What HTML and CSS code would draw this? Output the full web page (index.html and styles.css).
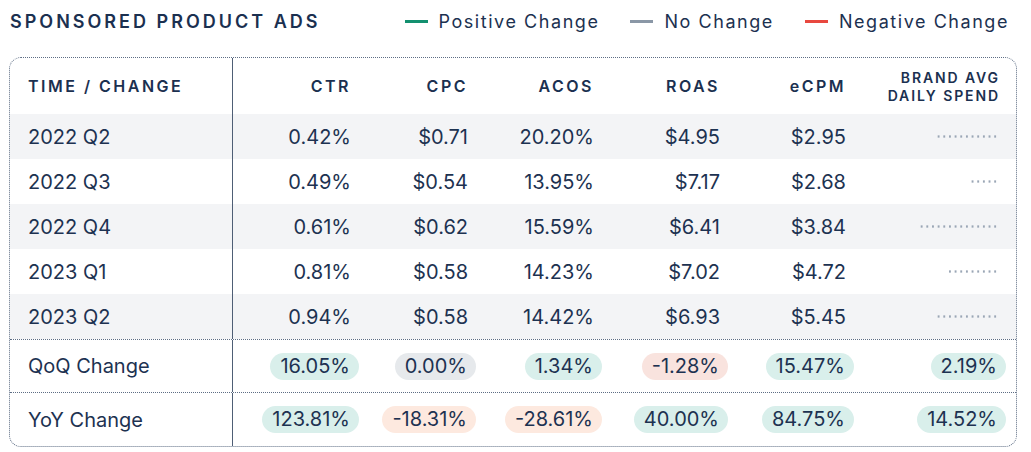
FILE: index.html
```html
<!DOCTYPE html>
<html>
<head>
<meta charset="utf-8">
<link rel="stylesheet" href="styles.css">
</head>
<body>
<div class="page">
  <div class="top">
    <h1 class="title">SPONSORED PRODUCT ADS</h1>
    <div class="legend">
      <span class="leg"><span class="swatch pos"></span>Positive Change</span>
      <span class="leg"><span class="swatch none"></span>No Change</span>
      <span class="leg"><span class="swatch neg"></span>Negative Change</span>
    </div>
  </div>
  <div class="card">
    <div class="row head">
      <div class="c first">TIME / CHANGE</div>
      <div class="c">CTR</div>
      <div class="c">CPC</div>
      <div class="c">ACOS</div>
      <div class="c">ROAS</div>
      <div class="c">eCPM</div>
      <div class="c small">BRAND AVG<br>DAILY SPEND</div>
    </div>
    <div class="row data alt">
      <div class="c first">2022 Q2</div>
      <div class="c">0.42%</div><div class="c">$0.71</div><div class="c">20.20%</div><div class="c">$4.95</div><div class="c">$2.95</div>
      <div class="c"><span class="dots" style="width:64px"></span></div>
    </div>
    <div class="row data">
      <div class="c first">2022 Q3</div>
      <div class="c">0.49%</div><div class="c">$0.54</div><div class="c">13.95%</div><div class="c">$7.17</div><div class="c">$2.68</div>
      <div class="c"><span class="dots" style="width:29px"></span></div>
    </div>
    <div class="row data alt">
      <div class="c first">2022 Q4</div>
      <div class="c">0.61%</div><div class="c">$0.62</div><div class="c">15.59%</div><div class="c">$6.41</div><div class="c">$3.84</div>
      <div class="c"><span class="dots" style="width:80px"></span></div>
    </div>
    <div class="row data">
      <div class="c first">2023 Q1</div>
      <div class="c">0.81%</div><div class="c">$0.58</div><div class="c">14.23%</div><div class="c">$7.02</div><div class="c">$4.72</div>
      <div class="c"><span class="dots" style="width:49px"></span></div>
    </div>
    <div class="row data alt">
      <div class="c first">2023 Q2</div>
      <div class="c">0.94%</div><div class="c">$0.58</div><div class="c">14.42%</div><div class="c">$6.93</div><div class="c">$5.45</div>
      <div class="c"><span class="dots" style="width:64px"></span></div>
    </div>
    <div class="row change">
      <div class="c first">QoQ Change</div>
      <div class="c"><span class="pill up">16.05%</span></div>
      <div class="c"><span class="pill flat">0.00%</span></div>
      <div class="c"><span class="pill up">1.34%</span></div>
      <div class="c"><span class="pill down">-1.28%</span></div>
      <div class="c"><span class="pill up">15.47%</span></div>
      <div class="c"><span class="pill up">2.19%</span></div>
    </div>
    <div class="row change last">
      <div class="c first">YoY Change</div>
      <div class="c"><span class="pill up">123.81%</span></div>
      <div class="c"><span class="pill down2">-18.31%</span></div>
      <div class="c"><span class="pill down2">-28.61%</span></div>
      <div class="c"><span class="pill up">40.00%</span></div>
      <div class="c"><span class="pill up">84.75%</span></div>
      <div class="c"><span class="pill up">14.52%</span></div>
    </div>
  </div>
</div>
</body>
</html>
```
FILE: styles.css
```css
* { box-sizing: border-box; }
html, body { margin: 0; padding: 0; background: #fff; }
body { font-family: Inter, "Noto Sans", sans-serif; color: #1c3150; }

.page { padding: 0 14px 0 9px; }

.top {
  display: flex;
  justify-content: space-between;
  align-items: center;
  height: 43px;
  padding-right: 8px;
}
.title {
  margin: 0 0 0 1px;
  font-size: 18px;
  font-weight: 600;
  letter-spacing: 3px;
  color: #1b3050;
}
.legend { display: flex; gap: 31px; }
.leg {
  display: flex;
  align-items: center;
  font-size: 18px;
  letter-spacing: 1.55px;
  color: #1c3150;
}
.swatch { width: 23px; height: 3px; margin-right: 11px; }
.swatch.pos { background: #13906f; }
.swatch.none { background: #8a97a6; }
.swatch.neg { background: #e8483f; }

.card {
  margin-top: 14px;
  width: 1008px;
  border: 1px dotted #5d6d84;
  border-radius: 12px;
  overflow: hidden;
}
.row {
  display: grid;
  grid-template-columns: 223px 136px 117px 126px 126px 126px 152px;
  align-items: stretch;
}
.c {
  display: flex;
  align-items: center;
  justify-content: flex-end;
  padding-right: 18px;
  font-size: 20px;
  color: #1d3251;
}
.c.first {
  justify-content: flex-start;
  padding-left: 18px;
  border-right: 1px solid #4e5e75;
}
.head { height: 56px; }
.head .c {
  font-size: 16px;
  font-weight: 600;
  letter-spacing: 2.5px;
  color: #1b3050;
}
.head .c.small {
  font-size: 14px;
  letter-spacing: 1.9px;
  text-align: right;
  line-height: 18px;
  padding-top: 2px;
  padding-right: 16px;
}
.data { height: 45px; }
.alt { background: #f3f4f6; }
.change { height: 53px; border-top: 1px dotted #5d6d84; }
.change.last { height: 54px; }

.dots {
  display: block;
  height: 3px;
  background: radial-gradient(circle, #9aa6b5 1px, transparent 1.3px) right center / 5.67px 3px repeat-x;
}

.pill {
  display: inline-block;
  height: 27px;
  line-height: 27px;
  padding: 0 9px 0 10px;
  margin-right: -8px;
  border-radius: 14px;
  font-size: 20px;
}
.pill.up { background: #d9efeb; }
.pill.flat { background: #e6e9ec; }
.pill.down { background: #f9e3de; }
.pill.down2 { background: #fde9df; }
```
